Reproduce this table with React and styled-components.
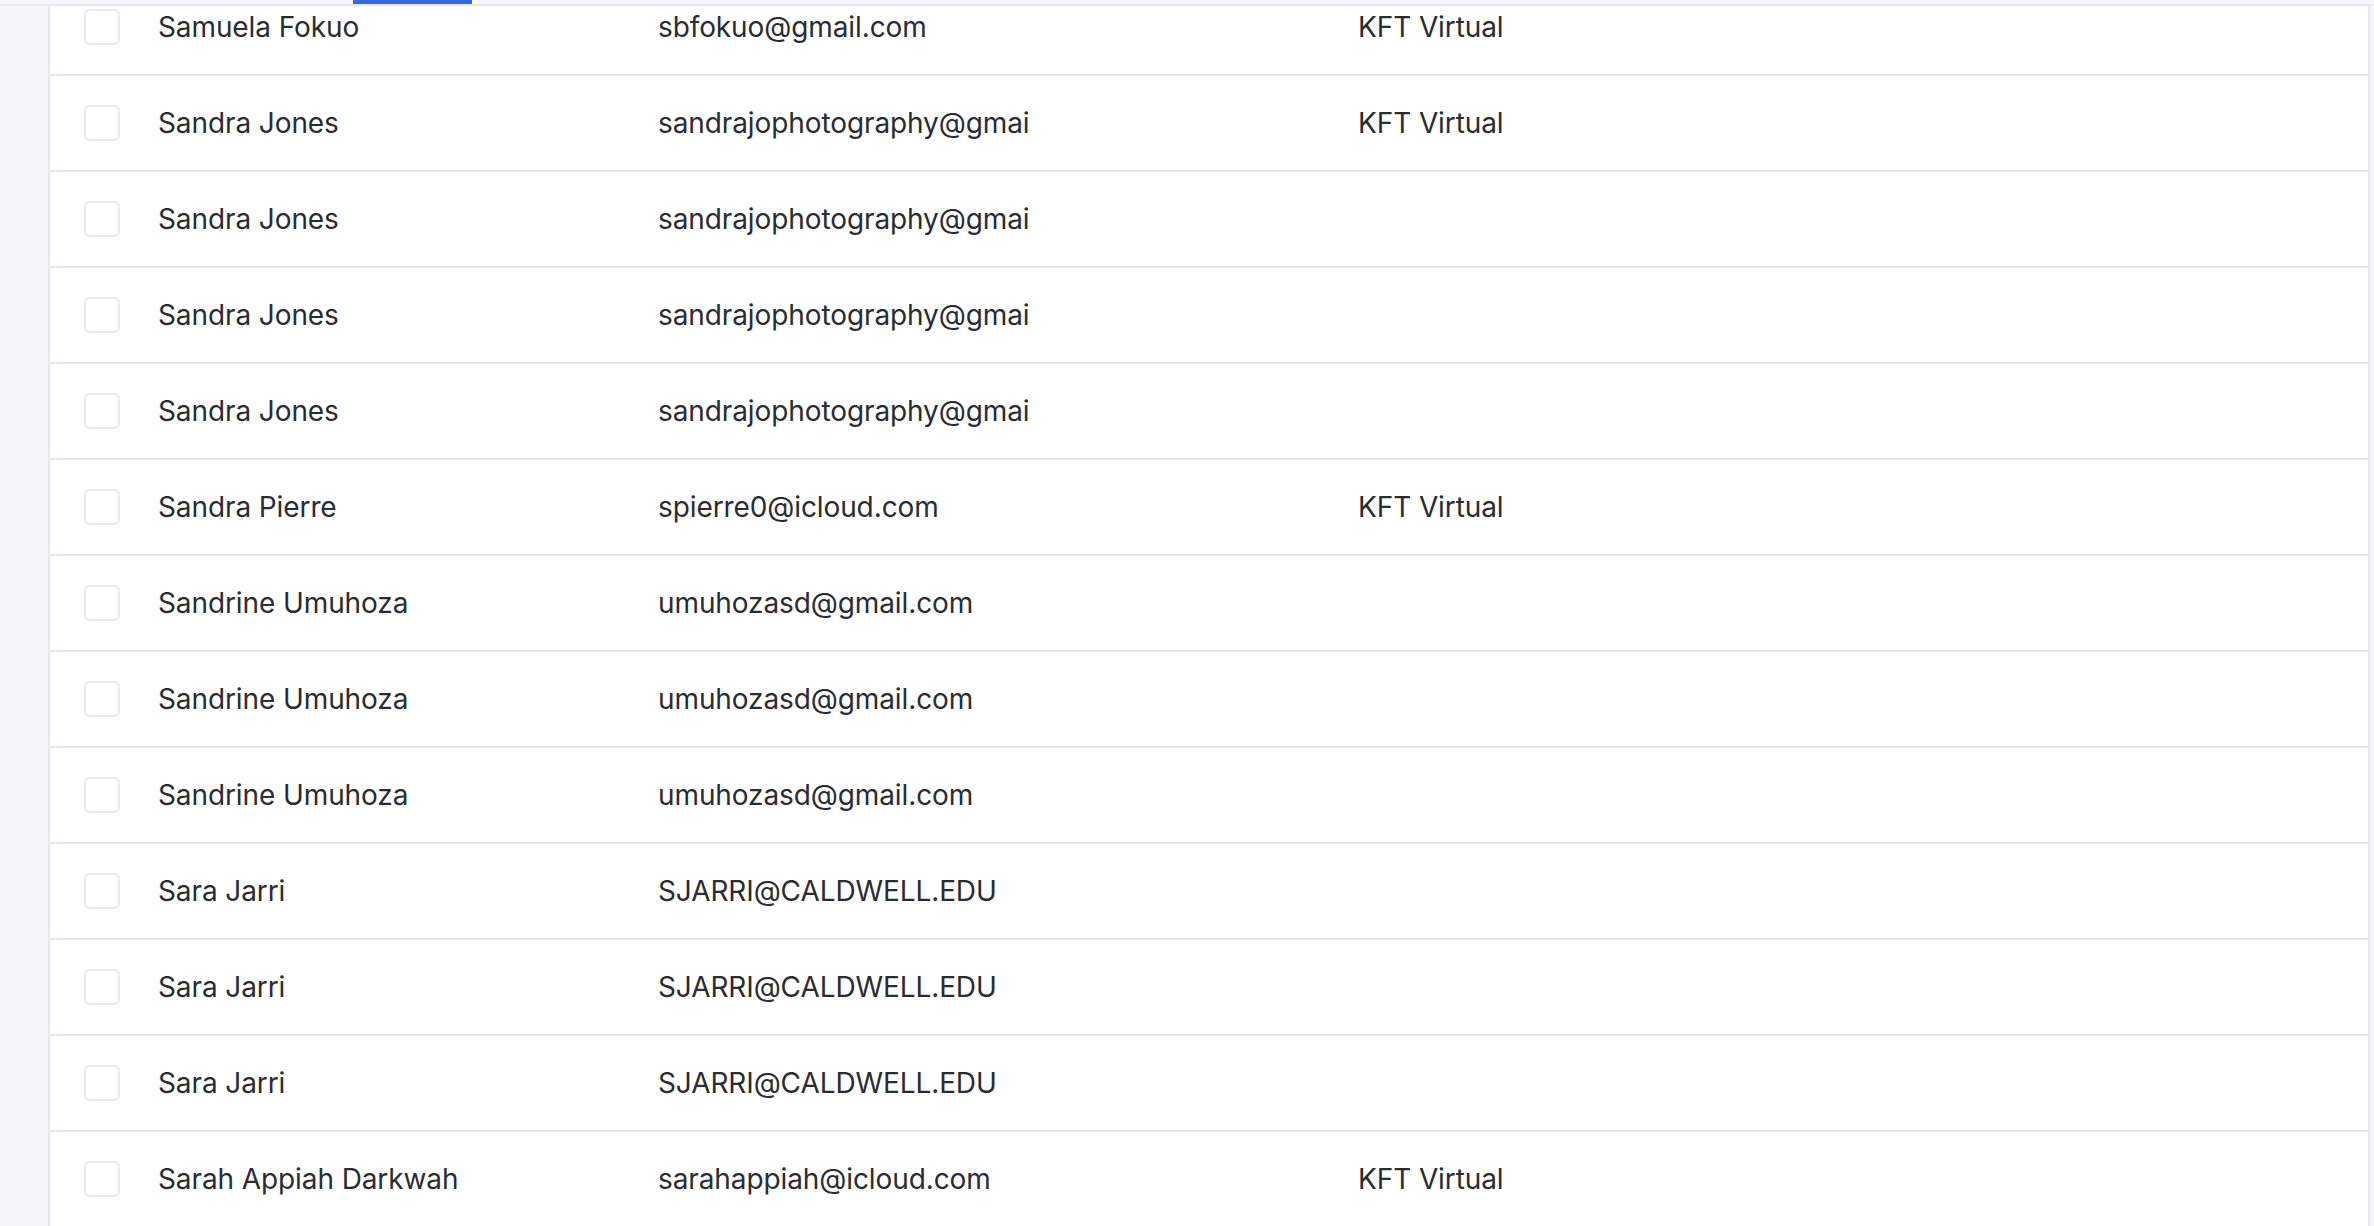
import React from "react";
import styled, { createGlobalStyle } from "styled-components";

const Global = createGlobalStyle`
  html, body {
    margin: 0;
    padding: 0;
    background: #f6f7fb;
    overflow: hidden;
  }
  * { box-sizing: border-box; }
`;

const Page = styled.div`
  width: 2374px;
  height: 1226px;
  display: flex;
  flex-direction: column;
  background: #f6f7fb;
  font-family: Inter, "Noto Sans", sans-serif;
  overflow: hidden;
`;

const TabStrip = styled.div`
  height: 6px;
  flex: none;
  display: flex;
  padding-left: 353px;
  border-bottom: 2px solid #e6e7f1;
  background: #f6f7fb;
`;

const TabIndicator = styled.div`
  width: 119px;
  height: 4px;
  background: #3a66e0;
`;

const Body = styled.div`
  flex: 1;
  min-height: 0;
  display: flex;
  padding: 0 4px 0 48px;
`;

const Panel = styled.div`
  flex: 1;
  min-width: 0;
  background: #ffffff;
  border-left: 2px solid #e6e7f1;
  border-right: 2px solid #e6e7f1;
  overflow: hidden;
`;

const List = styled.div`
  margin-top: -26px;
`;

const Row = styled.div`
  display: grid;
  grid-template-columns: 108px 500px 700px 1fr;
  align-items: center;
  height: 96px;
  border-bottom: 2px solid #e6e7f1;
  color: #2a2c32;
  font-size: 28px;
  letter-spacing: -0.1px;
  line-height: 34px;
`;

const CheckCell = styled.div`
  padding-left: 34px;
  display: flex;
  align-items: center;
`;

const Checkbox = styled.span`
  display: block;
  width: 36px;
  height: 36px;
  border: 2px solid #e7e9f3;
  border-radius: 6px;
  background: #fff;
`;

const Cell = styled.div`
  white-space: nowrap;
  overflow: hidden;
  max-width: ${(p) => (p.$clip ? `${p.$clip}px` : "none")};
`;

const rows = [
  ["Samuela Fokuo", "sbfokuo@gmail.com", "KFT Virtual"],
  ["Sandra Jones", "sandrajophotography@gmail.com", "KFT Virtual"],
  ["Sandra Jones", "sandrajophotography@gmail.com", ""],
  ["Sandra Jones", "sandrajophotography@gmail.com", ""],
  ["Sandra Jones", "sandrajophotography@gmail.com", ""],
  ["Sandra Pierre", "spierre0@icloud.com", "KFT Virtual"],
  ["Sandrine Umuhoza", "umuhozasd@gmail.com", ""],
  ["Sandrine Umuhoza", "umuhozasd@gmail.com", ""],
  ["Sandrine Umuhoza", "umuhozasd@gmail.com", ""],
  ["Sara Jarri", "SJARRI@CALDWELL.EDU", ""],
  ["Sara Jarri", "SJARRI@CALDWELL.EDU", ""],
  ["Sara Jarri", "SJARRI@CALDWELL.EDU", ""],
  ["Sarah Appiah Darkwah", "sarahappiah@icloud.com", "KFT Virtual"],
];

export default function App() {
  return (
    <>
      <Global />
      <Page>
        <TabStrip>
          <TabIndicator />
        </TabStrip>
        <Body>
          <Panel>
            <List>
              {rows.map(([name, email, group], i) => (
                <Row key={i}>
                  <CheckCell>
                    <Checkbox />
                  </CheckCell>
                  <Cell>{name}</Cell>
                  <Cell $clip={372}>{email}</Cell>
                  <Cell>{group}</Cell>
                </Row>
              ))}
            </List>
          </Panel>
        </Body>
      </Page>
    </>
  );
}
